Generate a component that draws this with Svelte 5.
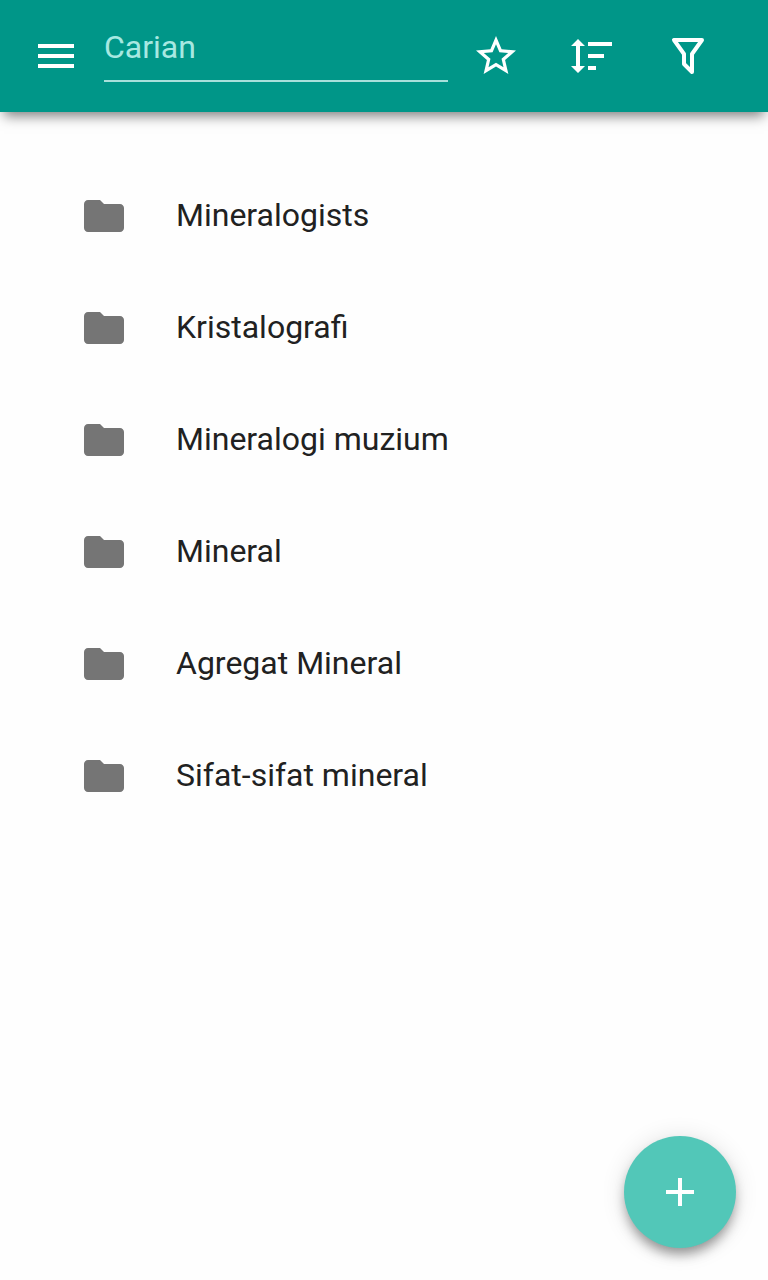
<script>
	const folders = [
		'Mineralogists',
		'Kristalografi',
		'Mineralogi muzium',
		'Mineral',
		'Agregat Mineral',
		'Sifat-sifat mineral'
	];

	let query = '';
</script>

<svelte:head>
	<title>Mineral</title>
</svelte:head>

<div class="screen">
	<header class="toolbar">
		<button class="icon" aria-label="Menu">
			<svg viewBox="0 0 24 24"><path d="M3 18h18v-2H3v2zm0-5h18v-2H3v2zm0-7v2h18V6H3z" /></svg>
		</button>

		<input class="search" type="text" placeholder="Carian" bind:value={query} />

		<div class="actions">
			<button class="icon" aria-label="Favorites">
				<svg viewBox="0 0 24 24">
					<path
						d="M12 15.39L8.24 17.66l.99-4.28-3.32-2.88 4.38-.37L12 6.09l1.71 4.04 4.38.37-3.32 2.88.99 4.28M22 9.24l-7.19-.61L12 2 9.19 8.63 2 9.24l5.45 4.73L5.82 21 12 17.27 18.18 21l-1.64-7.03L22 9.24z"
					/>
				</svg>
			</button>
			<button class="icon" aria-label="Sort">
				<svg viewBox="0 0 24 24">
					<path
						d="M6 7h2.5L5 3.5 1.5 7H4v10H1.5L5 20.5 8.5 17H6V7zm4-2v2h12V5H10zm0 14h4v-2h-4v2zm0-6h8v-2h-8v2z"
					/>
				</svg>
			</button>
			<button class="icon" aria-label="Filter">
				<svg viewBox="0 0 24 24">
					<path class="outline" d="M5 4h14l-5 7v9l-4-4v-5z" />
				</svg>
			</button>
		</div>
	</header>

	<ul class="list">
		{#each folders as folder}
			<li class="row">
				<svg class="folder" viewBox="0 0 24 24">
					<path
						d="M10 4H4c-1.1 0-1.99.9-1.99 2L2 18c0 1.1.9 2 2 2h16c1.1 0 2-.9 2-2V8c0-1.1-.9-2-2-2h-8l-2-2z"
					/>
				</svg>
				<span class="name">{folder}</span>
			</li>
		{/each}
	</ul>

	<button class="fab" aria-label="Add">
		<svg viewBox="0 0 24 24"><path d="M19 13h-6v6h-2v-6H5v-2h6V5h2v6h6v2z" /></svg>
	</button>
</div>

<style>
	:global(body) {
		margin: 0;
		background: #fefefe;
	}

	.screen {
		position: relative;
		height: 1280px;
		overflow: hidden;
		font-family: Roboto, sans-serif;
		font-size: 32px;
		color: #212121;
	}

	button {
		padding: 0;
		border: none;
		background: none;
		color: #fff;
	}

	svg {
		display: block;
		width: 48px;
		height: 48px;
		fill: currentColor;
	}

	.toolbar {
		display: flex;
		align-items: center;
		box-sizing: border-box;
		height: 112px;
		padding: 0 56px 0 32px;
		background: #009688;
		box-shadow: 0 8px 12px -4px rgba(0, 0, 0, 0.5);
	}

	.search {
		box-sizing: border-box;
		width: 344px;
		height: 68px;
		margin: 0 24px 16px;
		padding: 0;
		border: none;
		border-bottom: 2px solid #a8e0db;
		border-radius: 0;
		outline: none;
		background: none;
		font: inherit;
		color: #fff;
	}

	.search::placeholder {
		color: #a7e8e1;
		opacity: 1;
	}

	.actions {
		display: flex;
		gap: 48px;
	}

	.outline {
		fill: none;
		stroke: currentColor;
		stroke-width: 2;
		stroke-linejoin: round;
	}

	.list {
		margin: 0;
		padding: 48px 80px;
		list-style: none;
	}

	.row {
		display: flex;
		align-items: center;
		gap: 48px;
		height: 112px;
	}

	.name {
		padding-bottom: 2px;
	}

	.folder {
		color: #757575;
	}

	.fab {
		position: absolute;
		right: 32px;
		bottom: 32px;
		display: flex;
		align-items: center;
		justify-content: center;
		width: 112px;
		height: 112px;
		border-radius: 50%;
		background: #52c7b8;
		box-shadow:
			0 8px 12px -2px rgba(0, 0, 0, 0.38),
			0 2px 24px rgba(0, 0, 0, 0.12);
	}
</style>
